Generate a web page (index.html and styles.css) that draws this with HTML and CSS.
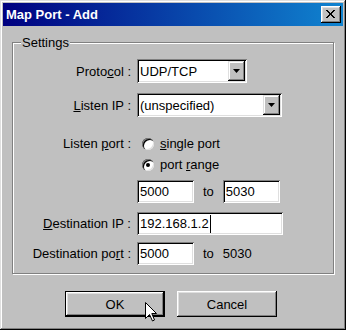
FILE: index.html
```html
<!DOCTYPE html>
<html>
<head>
<meta charset="utf-8">
<link rel="stylesheet" href="styles.css">
</head>
<body>
<div class="window">
  <div class="titlebar">
    <span class="title">Map Port - Add</span>
    <div class="close">
      <svg width="9" height="8" viewBox="0 0 9 8" shape-rendering="crispEdges">
        <path d="M0 0h2v1h-2z M7 0h2v1h-2z M1 1h2v1h-2z M6 1h2v1h-2z M2 2h2v1h-2z M5 2h2v1h-2z M3 3h3v1h-3z M3 4h3v1h-3z M2 5h2v1h-2z M5 5h2v1h-2z M1 6h2v1h-2z M6 6h2v1h-2z M0 7h2v1h-2z M7 7h2v1h-2z" fill="#000"/>
      </svg>
    </div>
  </div>
  <div class="content">
    <fieldset class="group">
      <legend class="legend">Settings</legend>
      <div class="row row-protocol">
        <span class="lbl">Proto<u>c</u>ol :</span>
        <div class="combo combo-protocol">
          <span class="val">UDP/TCP</span>
          <span class="drop"><svg width="7" height="4" viewBox="0 0 7 4"><path d="M0 0h7l-3.5 4z" fill="#000"/></svg></span>
        </div>
      </div>
      <div class="row row-listenip">
        <span class="lbl"><u>L</u>isten IP :</span>
        <div class="combo combo-ip">
          <span class="val">(unspecified)</span>
          <span class="drop"><svg width="7" height="4" viewBox="0 0 7 4"><path d="M0 0h7l-3.5 4z" fill="#000"/></svg></span>
        </div>
      </div>
      <div class="row row-ports">
        <span class="lbl lbl-tall">Listen <u>p</u>ort :</span>
        <div class="radios">
          <div class="radio-row"><span class="radio"></span><span class="rtext"><u>s</u>ingle port</span></div>
          <div class="radio-row"><span class="radio checked"></span><span class="rtext">port <u>r</u>ange</span></div>
        </div>
      </div>
      <div class="row row-range">
        <span class="lbl"></span>
        <div class="input small">5000</div>
        <span class="to">to</span>
        <div class="input small">5030</div>
      </div>
      <div class="row row-destip">
        <span class="lbl"><u>D</u>estination IP :</span>
        <div class="input wide">192.168.1.2<span class="caret"></span></div>
      </div>
      <div class="row row-destport">
        <span class="lbl">Destination po<u>r</u>t :</span>
        <div class="input small">5000</div>
        <span class="to">to</span>
        <span class="plain">5030</span>
      </div>
    </fieldset>
    <div class="buttons">
      <div class="btn btn-default">OK
        <svg class="cursor" width="12" height="20" viewBox="0 0 12 20">
          <path d="M0.5 0.5 L0.5 16.5 L4.5 12.5 L7.5 19 L9.5 18 L6.8 11.5 L11.5 11.5 Z" fill="#fff" stroke="#000" stroke-width="1" stroke-linejoin="miter"/>
        </svg>
      </div>
      <div class="btn">Cancel</div>
    </div>
  </div>
</div>
</body>
</html>
```
FILE: styles.css
```css
* { box-sizing: border-box; }
body {
  margin: 0;
  font-family: "Liberation Sans", Arial, sans-serif;
  font-size: 13px;
  color: #000;
  background: #c0c0c0;
}
.window {
  width: 346px;
  height: 330px;
  padding: 3px;
  background: #c0c0c0;
  box-shadow: inset -1px -1px #000, inset 1px 1px #dfdfdf, inset -2px -2px #808080, inset 2px 2px #fff;
  display: flex;
  flex-direction: column;
}
.titlebar {
  height: 23px;
  flex: none;
  background: linear-gradient(to right, #000080, #1084d0);
  display: flex;
  align-items: center;
  justify-content: space-between;
  padding: 0 2px 0 3px;
}
.title {
  color: #fff;
  font-weight: bold;
  font-size: 13px;
}
.close {
  width: 20px;
  height: 17px;
  background: #c0c0c0;
  display: flex;
  align-items: center;
  justify-content: center;
  padding: 0 1px 1px 0;
  box-shadow: inset -1px -1px #000, inset 1px 1px #fff, inset -2px -2px #808080, inset 2px 2px #dfdfdf;
}
.close svg { display: block; }
.content {
  flex: 1;
  display: flex;
  flex-direction: column;
}
.group {
  margin: 9px 0 0 9px;
  width: 322px;
  min-inline-size: 0;
  border: 1px solid #808080;
  box-shadow: inset 1px 1px #fff, 1px 1px #fff;
  padding: 0 0 8px 0;
}
.legend {
  margin-left: 8px;
  padding: 0 1px;
  line-height: 15px;
  background: #c0c0c0;
}
.row {
  display: flex;
  align-items: center;
}
.lbl {
  width: 118px;
  flex: none;
  text-align: right;
  margin-right: 6px;
  white-space: nowrap;
}
.row-protocol { margin-top: 9px; }
.row-listenip { margin-top: 10px; }
.row-ports { margin-top: 16px; align-items: flex-start; }
.row-range { margin-top: 5px; }
.row-destip { margin-top: 9px; }
.row-destport { margin-top: 7px; }
.lbl-tall { line-height: 21px; }
.combo {
  height: 24px;
  background: #fff;
  display: flex;
  align-items: center;
  justify-content: space-between;
  padding: 2px 2px 2px 3px;
  box-shadow: inset 1px 1px #808080, inset -1px -1px #fff, inset 2px 2px #000, inset -2px -2px #dfdfdf;
}
.combo-protocol { width: 110px; }
.combo-ip { width: 145px; }
.drop {
  width: 17px;
  height: 20px;
  background: #c0c0c0;
  display: flex;
  align-items: center;
  justify-content: center;
  box-shadow: inset -1px -1px #000, inset 1px 1px #dfdfdf, inset -2px -2px #808080, inset 2px 2px #fff;
}
.drop svg { display: block; }
.radios {
  display: flex;
  flex-direction: column;
}
.radio-row {
  height: 21px;
  display: flex;
  align-items: center;
  margin-left: 5px;
}
.radio {
  width: 12px;
  height: 12px;
  border-radius: 50%;
  background: #fff;
  box-shadow: inset 1px 1px #808080, inset 2px 2px #000, inset -1px -1px #dfdfdf;
  display: flex;
  align-items: center;
  justify-content: center;
}
.radio.checked::after {
  content: "";
  width: 4px;
  height: 4px;
  border-radius: 50%;
  background: #000;
}
.rtext { margin-left: 6px; }
.input {
  height: 23px;
  background: #fff;
  display: flex;
  align-items: center;
  padding: 0 2px 0 3px;
  box-shadow: inset 1px 1px #808080, inset -1px -1px #fff, inset 2px 2px #000, inset -2px -2px #dfdfdf;
  white-space: nowrap;
}
.input.small { width: 57px; }
.input.wide { width: 146px; }
.caret {
  display: inline-block;
  width: 1px;
  height: 18px;
  background: #000;
  margin-left: 1px;
}
.to { margin: 0 9px; }
.buttons {
  display: flex;
  gap: 12px;
  margin: 17px 0 0 62px;
}
.btn {
  position: relative;
  width: 100px;
  height: 26px;
  display: flex;
  align-items: center;
  justify-content: center;
  background: #c0c0c0;
  box-shadow: inset -1px -1px #000, inset 1px 1px #fff, inset -2px -2px #808080, inset 2px 2px #dfdfdf;
}
.btn-default {
  box-shadow: inset 0 0 0 1px #000, inset -2px -2px #000, inset 2px 2px #fff, inset -3px -3px #808080, inset 3px 3px #dfdfdf;
}
.cursor {
  position: absolute;
  left: 80px;
  top: 11px;
}
```
